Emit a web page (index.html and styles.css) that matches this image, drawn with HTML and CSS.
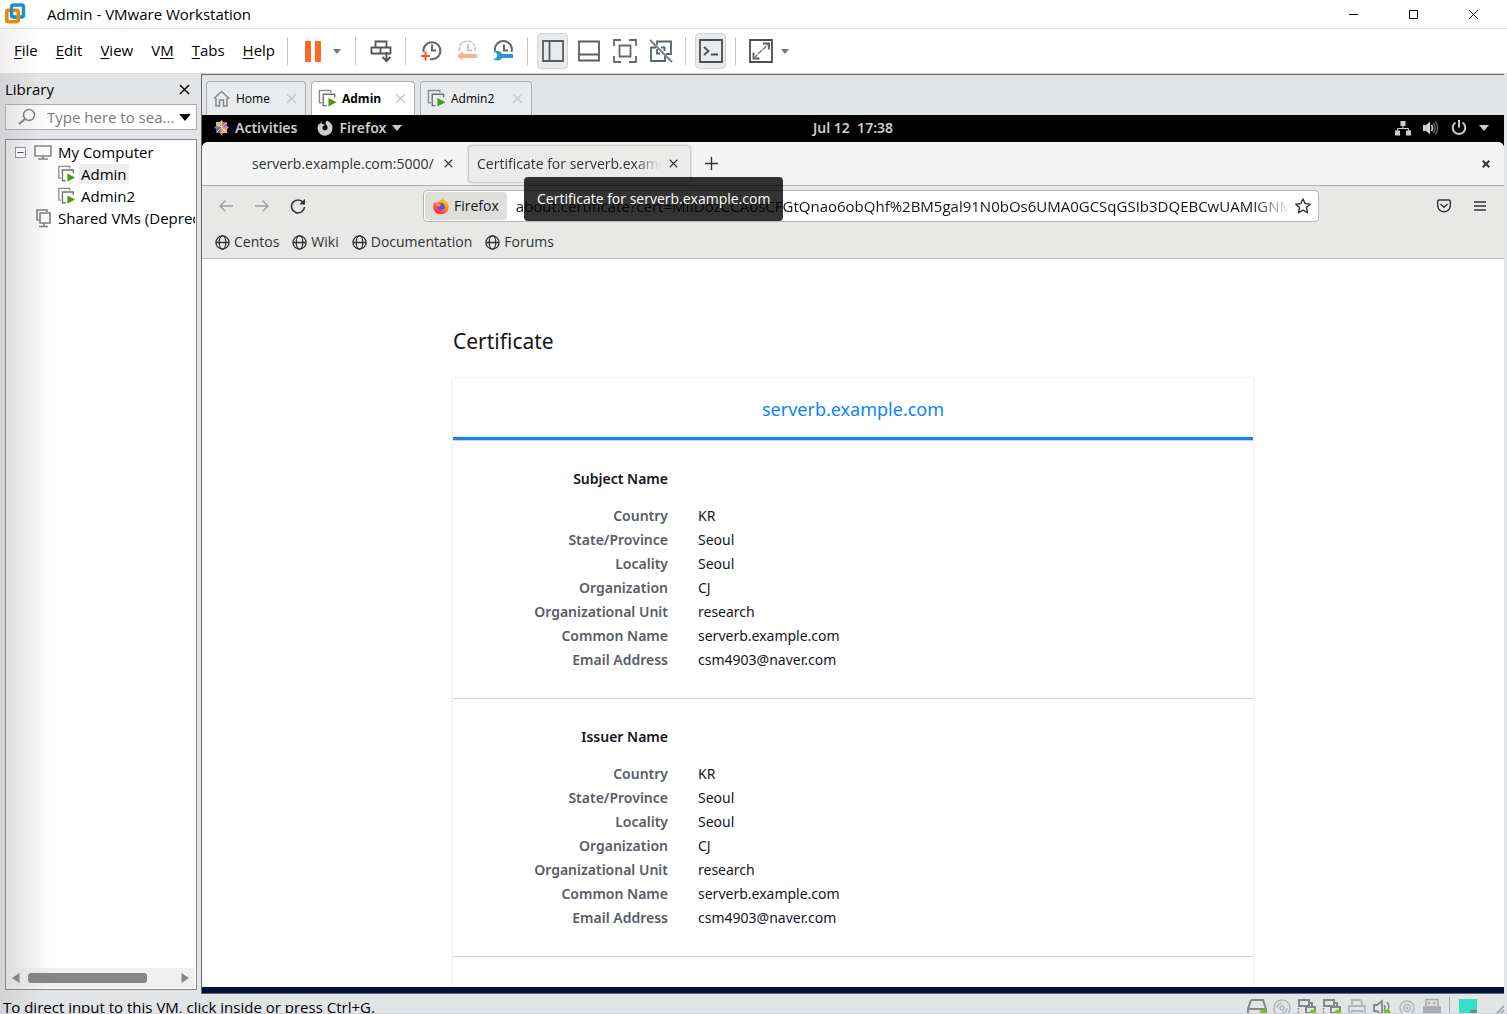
FILE: index.html
```html
<!DOCTYPE html>
<html lang="en">
<head>
<meta charset="utf-8">
<title>Admin - VMware Workstation</title>
<link rel="stylesheet" href="styles.css">
</head>
<body>
<svg class="defs" width="0" height="0" aria-hidden="true">
  <symbol id="vm" viewBox="0 0 20 20"><path d="M4 14.500H1.500V1.500H13.500V4" fill="none" stroke="#8a8c8e" stroke-width="1.500"/><path d="M9 17.500H5.500V5.500H17.500V9" fill="none" stroke="#6f7173" stroke-width="1.500"/><path d="M11 9.500L19.500 14L11 18.500Z" fill="#4a9a12"/></symbol>
  <symbol id="x" viewBox="0 0 12 12"><path d="M1 1L11 11M11 1L1 11" fill="none" stroke="currentColor" stroke-width="1.500"/></symbol>
  <symbol id="globe" viewBox="0 0 16 16"><g fill="none" stroke="#2e3436" stroke-width="1.400"><circle cx="8" cy="8" r="7"/><ellipse cx="8" cy="8" rx="3.500" ry="7"/><path d="M1 8H15"/></g></symbol>
  <symbol id="caret" viewBox="0 0 10 6"><path d="M0 0H10L5 6Z" fill="currentColor"/></symbol>
  <symbol id="net" viewBox="0 0 20 20"><path d="M2 3H12V9H2ZM9 10H18V16H9ZM12 6H15V10" fill="none" stroke="#85878a" stroke-width="2"/><path d="M1.500 11V19M1.500 18H8" fill="none" stroke="#999" stroke-width="1.500" stroke-dasharray="2 1"/><circle cx="16" cy="16" r="3.500" fill="#7fc41c"/></symbol>
</svg>

<header class="titlebar">
  <svg class="logo" width="22" height="22" viewBox="0 0 22 22"><rect x="7.500" y="2" width="12" height="12" rx="2" fill="none" stroke="#1492cc" stroke-width="3.500"/><rect x="2.800" y="7.300" width="11.500" height="11.500" rx="2" fill="none" stroke="#e8860c" stroke-width="3.500"/><path d="M7.500 5V12Q7.500 14 9.500 14H12" fill="none" stroke="#1492cc" stroke-width="3"/></svg>
  <span class="title">Admin - VMware Workstation</span>
  <button class="win" aria-label="Minimize"><svg width="11" height="11" viewBox="0 0 11 11"><path d="M1 5.500H10" stroke="#000"/></svg></button>
  <button class="win" aria-label="Maximize"><svg width="11" height="11" viewBox="0 0 11 11"><path d="M1.500 1.500H9.500V9.500H1.500Z" fill="none" stroke="#000"/></svg></button>
  <button class="win" aria-label="Close"><svg width="11" height="11" viewBox="0 0 11 11"><path d="M1 1L10 10M10 1L1 10" stroke="#000"/></svg></button>
</header>

<div class="menubar">
  <nav class="menus">
    <button><u>F</u>ile</button><button><u>E</u>dit</button><button><u>V</u>iew</button><button>V<u>M</u></button><button><u>T</u>abs</button><button><u>H</u>elp</button>
  </nav>
  <div class="tools">
    <div class="group">
      <div class="split"><button class="tool" aria-label="Suspend"><svg width="18" height="22" viewBox="0 0 18 22"><path d="M1 1H7V22H1ZM11 1H17V22H11Z" fill="#fb6a22"/></svg></button><button class="drop" aria-label="Power options"><svg width="10" height="5"><use href="#caret"/></svg></button></div>
    </div>
    <div class="group">
      <button class="tool" aria-label="Send Ctrl+Alt+Del"><svg width="22" height="24" viewBox="0 0 22 24"><path d="M5.500 2.500H16.500V8.500H5.500ZM1.500 8.500H10.500V14.500H1.500ZM10.500 8.500H20.500V14.500H10.500Z" fill="none" stroke="#555" stroke-width="1.800"/><path d="M16.500 13V22M12.500 18L16.500 22L20.500 18" fill="none" stroke="#555" stroke-width="2"/></svg></button>
    </div>
    <div class="group">
      <button class="tool" aria-label="Take snapshot"><svg width="22" height="22" viewBox="0 0 22 22"><path d="M3.500 12A8.500 8.500 0 1 1 10 19M12 4.500V10.500H16" fill="none" stroke="#666" stroke-width="2"/><path d="M1 16H10M5.500 11.500V20.500" stroke="#ee5a28" stroke-width="2"/></svg></button>
      <button class="tool" aria-label="Revert snapshot"><svg width="22" height="22" viewBox="0 0 22 22"><path d="M3.500 11A8 8 0 1 1 19 11" fill="none" stroke="#c9c9c9" stroke-width="1.800" stroke-dasharray="4 1"/><path d="M12 4V10.500H16" fill="none" stroke="#c9c9c9" stroke-width="2"/><path d="M1 16L7 11.500V14H21V18H7V20.500Z" fill="#f9ae90"/></svg></button>
      <button class="tool" aria-label="Manage snapshots"><svg width="22" height="22" viewBox="0 0 22 22"><path d="M3 11A8.500 8.500 0 1 1 19.500 12M12 4.500V10.500H16" fill="none" stroke="#666" stroke-width="2"/><path d="M1 12.500H4L5.500 15.500L4 18.500H1A5 4 0 0 0 10 18H21V14H10A5 4 0 0 0 1 12.500Z" fill="#2b95d6"/></svg></button>
    </div>
    <div class="group">
      <button class="tool on" aria-label="Show library"><svg width="22" height="22" viewBox="0 0 22 22"><path d="M1 1H21V21H1ZM7.500 1V21" fill="none" stroke="#5b5d60" stroke-width="1.800"/></svg></button>
      <button class="tool" aria-label="Show thumbnail bar"><svg width="22" height="22" viewBox="0 0 22 22"><path d="M1 1.500H21V20.500H1ZM1 14.500H21" fill="none" stroke="#5b5d60" stroke-width="1.800"/></svg></button>
      <button class="tool" aria-label="Full screen"><svg width="24" height="24" viewBox="0 0 24 24"><path d="M1 7V1H8M16 1H23V7M23 17V23H16M8 23H1V17M6.500 6.500H17.500V17.500H6.500Z" fill="none" stroke="#66686a" stroke-width="1.800"/></svg></button>
      <button class="tool" aria-label="Unity"><svg width="24" height="24" viewBox="0 0 24 24"><path d="M8 6V2.500H22V15H17M7 8.500H2V22H16V17M12 8.500H15.500V12M8 10V14.500H11" fill="none" stroke="#56646e" stroke-width="1.800"/><path d="M1 1L23 23" stroke="#70808a" stroke-width="2"/></svg></button>
    </div>
    <div class="group">
      <button class="tool on" aria-label="Console view"><svg width="24" height="24" viewBox="0 0 24 24"><path d="M1 1H23V23H1Z" fill="none" stroke="#4c4e50" stroke-width="1.800"/><path d="M5 8L9.500 12L5 16M12 15.500H19" fill="none" stroke="#4c4e50" stroke-width="1.800"/></svg></button>
    </div>
    <div class="group">
      <div class="split"><button class="tool" aria-label="Stretch guest"><svg width="24" height="24" viewBox="0 0 24 24"><path d="M1 1H23V23H1Z" fill="none" stroke="#4c4e50" stroke-width="1.800"/><path d="M14 4.500H20V10.500M4.500 13.500V19.500H10.500" fill="none" stroke="#5b5d60" stroke-width="1.800"/><path d="M5 19L19.500 5" stroke="#77797c" stroke-width="1.400" stroke-dasharray="5 1"/></svg></button><button class="drop" aria-label="Stretch options"><svg width="10" height="5"><use href="#caret"/></svg></button></div>
    </div>
  </div>
</div>

<div class="main">
  <aside class="library">
    <div class="lib-head"><span>Library</span><button aria-label="Close library"><svg width="11" height="11"><use href="#x"/></svg></button></div>
    <div class="search">
      <svg width="18" height="18" viewBox="0 0 18 18"><circle cx="11" cy="7" r="5.500" fill="none" stroke="#808285" stroke-width="1.500"/><path d="M7 11L1 16" stroke="#808285" stroke-width="2"/></svg>
      <input type="text" placeholder="Type here to sea..." aria-label="Search library">
      <button aria-label="Search filter"><svg width="12" height="7" viewBox="0 0 10 6"><use href="#caret"/></svg></button>
    </div>
    <div class="tree">
      <ul>
        <li><svg class="expander" width="11" height="11" viewBox="0 0 11 11"><rect x=".5" y=".5" width="10" height="10" fill="#f4f4f4" stroke="#8f9194"/><path d="M2.500 5.500H8.500" stroke="#3a4f8f"/></svg><svg width="18" height="16" viewBox="0 0 18 16"><path d="M1 2H17V12H1ZM9 12V15M4 15H14" fill="none" stroke="#85878a" stroke-width="1.600"/></svg><span>My Computer</span></li>
        <li class="child"><svg width="19" height="18"><use href="#vm"/></svg><span class="selected">Admin</span></li>
        <li class="child"><svg width="19" height="18"><use href="#vm"/></svg><span>Admin2</span></li>
        <li class="shared"><svg width="16" height="20" viewBox="0 0 16 20"><path d="M3 12H1V2H11V4M4 5H14V15H4ZM8 15V18M3 18.500H12" fill="none" stroke="#7c7e80" stroke-width="1.600"/></svg><span>Shared VMs (Deprecated)</span></li>
      </ul>
      <div class="hscroll"><svg width="8" height="10" viewBox="0 0 8 10"><path d="M7.500 0V10L0 5Z" fill="#858585"/></svg><div class="track"><div class="thumb"></div></div><svg width="8" height="10" viewBox="0 0 8 10"><path d="M.5 0V10L8 5Z" fill="#858585"/></svg></div>
    </div>
  </aside>

  <main class="workspace">
    <div class="vmtabs">
      <div class="vmtab home"><svg width="17" height="17" viewBox="0 0 17 17"><path d="M1 8.500L8.500 1.500L16 8.500M3 8V16H6.500V10H10.500V16H14V8" fill="none" stroke="#85878a" stroke-width="1.500"/></svg><span>Home</span><button aria-label="Close Home"><svg width="11" height="11"><use href="#x"/></svg></button></div>
      <div class="vmtab active"><svg width="19" height="19"><use href="#vm"/></svg><span>Admin</span><button aria-label="Close Admin"><svg width="11" height="11"><use href="#x"/></svg></button></div>
      <div class="vmtab wide"><svg width="19" height="19"><use href="#vm"/></svg><span>Admin2</span><button aria-label="Close Admin2"><svg width="11" height="11"><use href="#x"/></svg></button></div>
    </div>

    <div class="guest">
      <div class="gnome">
        <div class="gnome-left">
          <button><svg width="15" height="15" viewBox="0 0 15 15"><path d="M7.500 0L10 3V7H5V3Z" fill="#e6c257"/><path d="M15 7.500L12 10H8V5H12Z" fill="#9a9fd0"/><path d="M7.500 15L5 12V8H10V12Z" fill="#e8a93c"/><path d="M0 7.500L3 5H7V10H3Z" fill="#a55ca5"/><path d="M2 2H6.500V6.500H2Z" fill="#a8cf6a"/><path d="M8.500 2H13V6.500H8.500Z" fill="#b45fa9"/><path d="M8.500 8.500H13V13H8.500Z" fill="#efb14e"/><path d="M2 8.500H6.500V13H2Z" fill="#6668a8"/><path d="M3 3L12 12M12 3L3 12" stroke="#eee" stroke-width=".7"/></svg>Activities</button>
          <button><svg width="16" height="16" viewBox="0 0 16 16"><path d="M5 1Q4 3 5 4Q7 4 8 5Q6 6 5.500 7Q5 10 8 10.500Q11 10 10.500 7Q10 5 8.500 4Q8 2 10 .5Q15.500 3 15.500 8A7.500 7.500 0 0 1 .5 8.500Q.5 6 2 3.500L3 4.500Q3.500 2 5 1Z" fill="#ccc"/></svg>Firefox<svg width="10" height="6"><use href="#caret"/></svg></button>
        </div>
        <time>Jul 12&nbsp; 17:38</time>
        <div class="status-icons">
          <svg width="16" height="16" viewBox="0 0 16 16"><path d="M5.500 1H10.500V6H5.500ZM0 10.500H5V15.500H0ZM11 10.500H16V15.500H11Z" fill="#ccc"/><path d="M8 5V8.500M2.500 11V8.500H13.500V11" fill="none" stroke="#ccc"/></svg>
          <svg width="16" height="16" viewBox="0 0 16 16"><path d="M0 5H3L7 1.500V14.500L3 11H0Z" fill="#ccc"/><path d="M8.500 5Q10.500 8 8.500 11" fill="none" stroke="#ccc" stroke-width="1.600"/><path d="M10.500 3Q13.500 8 10.500 13M12.500 1.500Q16.500 8 12.500 14.500" fill="none" stroke="#666" stroke-width="1.400"/></svg>
          <svg width="16" height="16" viewBox="0 0 16 16"><path d="M4.500 2.500A6.300 6.300 0 1 0 11.500 2.500M8 0V7.500" fill="none" stroke="#ccc" stroke-width="2"/></svg>
          <svg width="10" height="6"><use href="#caret"/></svg>
        </div>
      </div>

      <div class="browser">
        <div class="btabs">
          <div class="btab"><span>serverb.example.com:5000/</span><button aria-label="Close tab"><svg width="9" height="9" viewBox="0 0 12 12"><use href="#x"/></svg></button></div>
          <div class="btab current"><span class="fade">Certificate for serverb.example.com</span><button aria-label="Close tab"><svg width="9" height="9" viewBox="0 0 12 12"><use href="#x"/></svg></button><div class="tooltip" role="tooltip">Certificate for serverb.example.com</div></div>
          <button class="newtab" aria-label="New tab"><svg width="13" height="13" viewBox="0 0 13 13"><path d="M6.500 0V13M0 6.500H13" stroke="#2e3436" stroke-width="1.400"/></svg></button>
          <button class="bclose" aria-label="Close window"><svg width="8" height="8" viewBox="0 0 8 8"><path d="M.7 .7L7.300 7.300M7.300 .7L.7 7.300" stroke="#2e3436" stroke-width="2"/></svg></button>
        </div>
        <div class="navbar">
          <button class="nb dim" aria-label="Back"><svg width="14" height="12" viewBox="0 0 14 12"><path d="M14 6H1M6.500 .5L1 6L6.500 11.500" fill="none" stroke="currentColor" stroke-width="1.300"/></svg></button>
          <button class="nb dim" aria-label="Forward"><svg width="14" height="12" viewBox="0 0 14 12"><path d="M0 6H13M7.500 .5L13 6L7.500 11.500" fill="none" stroke="currentColor" stroke-width="1.300"/></svg></button>
          <button class="nb" aria-label="Reload"><svg width="16" height="16" viewBox="0 0 16 16"><path d="M13.200 4.500A6.500 6.500 0 1 0 14.500 9" fill="none" stroke="currentColor" stroke-width="1.600"/><path d="M15 .8V6.500H9.300Z" fill="currentColor"/></svg></button>
          <div class="urlbar">
            <button class="chip"><svg width="16" height="16" viewBox="0 0 16 16"><defs><linearGradient id="fx" x1=".8" y1="0" x2=".2" y2="1"><stop offset="0" stop-color="#ffe226"/><stop offset=".45" stop-color="#ff8a16"/><stop offset="1" stop-color="#f5156c"/></linearGradient></defs><path d="M2 3.500L3 5Q4 3.500 6 3.500Q8 1.500 10 0Q10.500 2 12.500 3L13 2.500Q16 5.500 15.800 9A7.800 7.300 0 0 1 .2 9Q0 6 2 3.500Z" fill="url(#fx)"/><circle cx="8" cy="8.700" r="3.600" fill="#7147e0"/><path d="M3.500 6Q7 5 8.500 7Q6.500 7 6.200 9Q4.500 9 3.500 6Z" fill="#ff9a20"/></svg>Firefox</button>
            <input class="url" type="text" aria-label="Address" value="about:certificate?cert=MIIDozCCAosCFGtQnao6obQhf%2BM5gal91N0bOs6UMA0GCSqGSIb3DQEBCwUAMIGNMQswCQYDVQQGEwJL">
            <button class="star" aria-label="Bookmark this page"><svg width="16" height="16" viewBox="0 0 16 16"><path d="M8 1L10.200 5.600L15.200 6.200L11.500 9.600L12.500 14.700L8 12.200L3.500 14.700L4.500 9.600L.8 6.200L5.800 5.600Z" fill="none" stroke="#2e3436" stroke-width="1.400" stroke-linejoin="round"/></svg></button>
          </div>
          <button class="nb" aria-label="Save to Pocket"><svg width="14" height="14" viewBox="0 0 14 14"><path d="M2 1H12Q13.300 1 13.300 2.300V6.500A6.300 6.300 0 0 1 .7 6.500V2.300Q.7 1 2 1ZM3.500 5L7 8.300L10.500 5" fill="none" stroke="currentColor" stroke-width="1.400"/></svg></button>
          <button class="nb" aria-label="Menu"><svg width="12" height="10" viewBox="0 0 12 10"><path d="M0 1H12M0 5H12M0 9H12" stroke="currentColor" stroke-width="1.400"/></svg></button>
        </div>
        <nav class="bookmarks">
          <a href="#"><svg width="15" height="15"><use href="#globe"/></svg>Centos</a>
          <a href="#"><svg width="15" height="15"><use href="#globe"/></svg>Wiki</a>
          <a href="#"><svg width="15" height="15"><use href="#globe"/></svg>Documentation</a>
          <a href="#"><svg width="15" height="15"><use href="#globe"/></svg>Forums</a>
        </nav>
        <div class="page">
          <article>
            <h1>Certificate</h1>
            <div class="card">
              <button class="certtab">serverb.example.com</button>
              <section>
                <h2>Subject Name</h2>
                <table>
                  <tr><th scope="row">Country</th><td>KR</td></tr>
                  <tr><th scope="row">State/Province</th><td>Seoul</td></tr>
                  <tr><th scope="row">Locality</th><td>Seoul</td></tr>
                  <tr><th scope="row">Organization</th><td>CJ</td></tr>
                  <tr><th scope="row">Organizational Unit</th><td>research</td></tr>
                  <tr><th scope="row">Common Name</th><td>serverb.example.com</td></tr>
                  <tr><th scope="row">Email Address</th><td>csm4903@naver.com</td></tr>
                </table>
              </section>
              <section>
                <h2>Issuer Name</h2>
                <table>
                  <tr><th scope="row">Country</th><td>KR</td></tr>
                  <tr><th scope="row">State/Province</th><td>Seoul</td></tr>
                  <tr><th scope="row">Locality</th><td>Seoul</td></tr>
                  <tr><th scope="row">Organization</th><td>CJ</td></tr>
                  <tr><th scope="row">Organizational Unit</th><td>research</td></tr>
                  <tr><th scope="row">Common Name</th><td>serverb.example.com</td></tr>
                  <tr><th scope="row">Email Address</th><td>csm4903@naver.com</td></tr>
                </table>
              </section>
              <section></section>
            </div>
          </article>
        </div>
      </div>
    </div>
  </main>
</div>

<footer class="statusbar">
  <span class="hint">To direct input to this VM, click inside or press Ctrl+G.</span>
  <div class="devices">
    <svg width="20" height="20" viewBox="0 0 20 20"><path d="M4 3H16L19 12V20M4 3L1 12V20M1 12H19M1 17H12" fill="none" stroke="#85878a" stroke-width="2"/><circle cx="16" cy="16" r="3.500" fill="#7fc41c"/></svg>
    <svg width="20" height="20" viewBox="0 0 20 20"><g fill="none" stroke="#b3b5b7" stroke-width="1.500"><circle cx="10" cy="11" r="8"/><circle cx="10" cy="11" r="2"/><path d="M5 11A5 5 0 0 1 10 6M15 11A5 5 0 0 1 10 16"/></g></svg>
    <svg width="20" height="20"><use href="#net"/></svg>
    <svg width="20" height="20"><use href="#net"/></svg>
    <svg width="20" height="20" viewBox="0 0 20 20"><path d="M5 9V3H13L15 5V9M4 17H2V9H18V17H16M5 14H15V19H5Z" fill="none" stroke="#b3b5b7" stroke-width="1.800"/></svg>
    <svg width="20" height="20" viewBox="0 0 20 20"><path d="M2 8H5L10 4V18L5 14H2Z" fill="none" stroke="#85878a" stroke-width="1.800"/><path d="M12 8Q14 11 12 14M15 5Q18 9 16 13" fill="none" stroke="#85878a" stroke-width="1.500"/><circle cx="15" cy="16" r="3.500" fill="#7fc41c"/></svg>
    <svg width="20" height="20" viewBox="0 0 20 20"><g fill="none" stroke="#b3b5b7" stroke-width="1.500"><circle cx="10" cy="11" r="7"/><circle cx="10" cy="11" r="3.500"/></g><circle cx="10" cy="11" r="1.500" fill="#b3b5b7"/></svg>
    <svg width="20" height="20" viewBox="0 0 20 20"><path d="M4 9V2.500H16V9" fill="#ddd" stroke="#a9abad" stroke-width="1.500"/><path d="M7 5V7M12 5V7" stroke="#a9abad" stroke-width="2"/><path d="M1 9H19V20H1Z" fill="#a9abad"/></svg>
    <span class="rule"></span>
    <svg width="20" height="20" viewBox="0 0 20 20"><path d="M1 2H19V20H1Z" fill="#38dfc8"/><path d="M19 13H12V20H19Z" fill="#6b8c8a"/></svg>
    <svg class="grip" width="10" height="20" viewBox="0 0 10 20"><path d="M0 18L9 9M4 18L9 13" stroke="#999" stroke-width="1.500"/></svg>
  </div>
</footer>
</body>
</html>
```

FILE: styles.css
```css
* { box-sizing: border-box; }
html, body { height: 100%; }
body {
  margin: 0;
  display: flex;
  flex-direction: column;
  overflow: hidden;
  background: #e3e4e6;
  color: #000;
  font: 14px/20px "Open Sans", "Noto Sans", sans-serif;
}
button { font: inherit; color: inherit; background: none; border: 0; padding: 0; margin: 0; display: flex; align-items: center; justify-content: center; }
input { font: inherit; border: 0; padding: 0; margin: 0; background: none; outline: 0; min-width: 0; }
svg { display: block; flex: none; }
.defs { position: absolute; }

/* Window chrome */
.titlebar { flex: none; display: flex; align-items: center; height: 29px; padding: 0 4px; background: #fff; border-bottom: 1px solid #e0e0e0; }
.title { flex: 1; margin-left: 21px; font-size: 15px; }
.win { width: 60px; height: 28px; }
.menubar { flex: none; display: flex; align-items: center; height: 45px; background: linear-gradient(90deg, #f1f1f1, #fff 40px); border-bottom: 1px solid #d9d9d9; }
.menus { display: flex; gap: 18px; min-width: 287px; padding: 0 0 3px 14px; font-size: 15px; }
.menus u { text-underline-offset: 2px; }
.tools { display: flex; align-items: center; }
.group { display: flex; align-items: center; gap: 5px; padding-right: 9px; }
.group::before { content: ""; width: 1px; height: 28px; margin-right: 4px; background: #c8c8c8; }
.split { display: flex; }
.tool { width: 31px; height: 36px; }
.tool.on { background: #e9eaeb; border: 1px solid #d2d4d6; border-radius: 4px; }
.drop { width: 18px; color: #77797c; }

.main { flex: 1; display: flex; min-height: 0; padding-right: 3px; }

/* Library */
.library { flex: none; display: flex; flex-direction: column; width: 201px; padding: 0 4px 4px 5px; background: linear-gradient(90deg, #d2d3d5, #e3e4e6 40px); font-size: 15px; }
.lib-head { display: flex; align-items: center; justify-content: space-between; height: 30px; padding-right: 7px; }
.search { display: flex; align-items: center; height: 26px; padding: 0 5px 0 12px; border: 1px solid #a9abae; background: linear-gradient(90deg, #e6e6e6, #fff 45px); }
.search input { flex: 1; margin: 0 5px 0 11px; height: 20px; color: #77797c; }
.search input::placeholder { color: #77797c; opacity: 1; }
.tree { flex: 1; display: flex; flex-direction: column; min-height: 0; margin-top: 9px; padding: 1px; border: 1px solid #82868f; background: linear-gradient(90deg, #dedede, #fff 45px); }
.tree ul { flex: 1; list-style: none; margin: 0; padding: 0; overflow: hidden; }
.tree li { display: flex; align-items: center; gap: 6px; height: 22px; padding-left: 8px; white-space: nowrap; }
.tree li.child { gap: 5px; padding-left: 50px; }
.tree li.shared { padding-left: 29px; }
.expander { margin-right: 2px; }
.selected { background: #eee; margin: 0 -2px; padding: 0 2px; }
.hscroll { flex: none; display: flex; align-items: center; gap: 8px; height: 20px; padding: 0 6px 0 5px; background: linear-gradient(90deg, #dedede, #f0f0f0 45px); }
.track { flex: 1; }
.thumb { width: 82%; height: 10px; border-radius: 3px; background: #858585; }

/* VM tabs */
.workspace { flex: 1; display: flex; flex-direction: column; min-width: 0; border: solid #65676b; border-width: 1px 0 1px 1px; background: #00103a; }
.vmtabs { flex: none; display: flex; align-items: flex-end; gap: 5px; height: 40px; padding-left: 4px; background: #e3e4e6; font-size: 12px; }
.vmtab { display: flex; align-items: center; gap: 6px; width: 100px; height: 34px; padding: 0 8px 0 6px; border: 1px solid #adafb2; border-bottom: 0; border-radius: 4px 4px 0 0; background: #eaebed; }
.vmtab span { flex: 1; }
.vmtab button { color: #c4c6c8; }
.vmtab.active { gap: 5px; width: 104px; background: #fff; font-weight: 700; }
.vmtab.wide { gap: 5px; width: 112px; }

/* Guest desktop */
.guest { flex: 1; display: flex; flex-direction: column; min-height: 0; margin-bottom: 6px; background: #000; color: #2e3436; font-family: "Noto Sans", "Open Sans", sans-serif; }
.gnome { flex: none; display: grid; grid-template-columns: 1fr auto 1fr; align-items: center; height: 27px; padding: 0 12px 2px; color: #ccc; font-weight: 600; }
.gnome-left { display: flex; gap: 20px; }
.gnome-left button { gap: 6px; }
.status-icons { display: flex; justify-content: flex-end; align-items: center; gap: 12px; padding-right: 3px; }

/* Browser */
.browser { flex: 1; display: flex; flex-direction: column; min-height: 0; border-radius: 6px 6px 0 0; background: #e8e8e7; overflow: hidden; font-family: "Open Sans", "Noto Sans", sans-serif; }
.btabs { flex: none; display: flex; align-items: center; gap: 2px; height: 44px; padding: 0 14px 0 41px; background: #f4f4f4; border-bottom: 1px solid #acacaa; }
.btab { position: relative; display: flex; align-items: center; justify-content: space-between; width: 223px; height: 38px; padding: 0 12px 0 8px; border: 1px solid transparent; border-radius: 4px; }
.btab.current { background: #ebebea; border-color: #cfcfcd; box-shadow: 0 0 3px #0003; }
.btab span { overflow: hidden; white-space: nowrap; }
.fade { width: 184px; mask-image: linear-gradient(90deg, #000 85%, transparent); }
.tooltip { position: absolute; z-index: 2; left: 55px; top: 31px; padding: 12px 13px; border-radius: 4px; background: #000c; color: #fff; line-height: 20px; white-space: nowrap; }
.newtab { width: 36px; height: 36px; }
.bclose { margin-left: auto; }
.navbar { flex: none; display: flex; align-items: center; height: 40px; padding: 0 6px; }
.nb { width: 36px; height: 36px; }
.dim { color: #9c9e9e; }
.urlbar { flex: 1; display: flex; align-items: center; height: 32px; margin: 0 107px; padding: 0 7px 0 1px; border: 1px solid #b4b4b2; border-radius: 4px; background: #fff; color: #15141a; }
.chip { gap: 5px; height: 28px; padding: 0 8px; border-radius: 3px; background: #dededd; }
.url { flex: 1; height: 24px; margin: 0 4px 0 9px; color: inherit; font-size: 15px; mask-image: linear-gradient(90deg, #000 95%, transparent); }
.bookmarks { flex: none; display: flex; align-items: center; gap: 13px; height: 33px; padding-left: 13px; border-bottom: 1px solid #b8b8b5; }
.bookmarks a { display: flex; align-items: center; gap: 4px; color: inherit; text-decoration: none; }
.page { flex: 1; min-height: 0; overflow: hidden; background: #fff; color: #15141a; font-family: "Noto Sans", "Open Sans", sans-serif; }
article { max-width: 800px; margin: 0 auto; padding-top: 66px; }
h1 { margin: 0 0 21px; font-size: 21px; line-height: 32px; font-weight: 400; }
.card { box-shadow: 0 0 3px #0002; }
.certtab { width: 100%; height: 62px; padding-top: 2px; border-bottom: 3px solid #0a84ff; color: #0a84ff; font-size: 18px; }
section { padding: 26px 0; border-top: 1px solid #d2d2d4; }
h2 { width: 215px; margin: 0 0 13px; text-align: right; font-size: 14px; line-height: 24px; font-weight: 600; }
table { border-collapse: collapse; }
th, td { height: 24px; padding: 0; line-height: 24px; }
th { width: 215px; text-align: right; font-weight: 600; color: #5b5b66; }
td { padding-left: 30px; }

/* Status bar */
.statusbar { flex: none; display: flex; height: 20px; padding-left: 3px; overflow: hidden; border-bottom: 1px solid #d5d5e2; background: linear-gradient(90deg, #d2d3d5, #e3e4e6 40px); }
.hint { flex: 1; font-size: 15px; line-height: 26px; }
.devices { display: flex; gap: 5px; padding: 3px 2px 0 0; }
.rule { width: 1px; height: 17px; margin: 0 3px 0 2px; background: #a9abad; }
.grip { margin-left: 12px; }
```
